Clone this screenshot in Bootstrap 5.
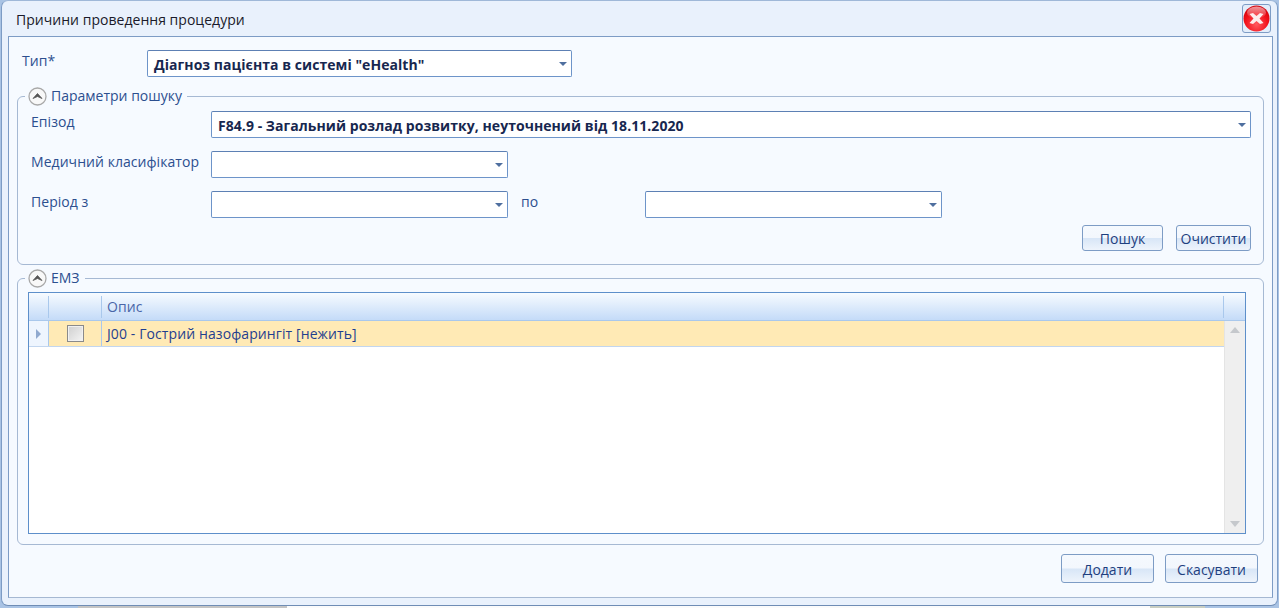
<!DOCTYPE html>
<html lang="uk">
<head>
<meta charset="utf-8">
<title>Причини проведення процедури</title>
<link href="https://cdn.jsdelivr.net/npm/bootstrap@5.3.0/dist/css/bootstrap.min.css" rel="stylesheet">
<style>
html,body{height:608px;overflow:hidden;}
body{background:#fff;font-family:"Open Sans","Noto Sans","Liberation Sans",sans-serif;font-size:14px;color:#1e3f7f;}
.backdrop{height:608px;background:linear-gradient(90deg,#a9c3e4 0,#a9c3e4 78px,#c4c4c4 78px,#c4c4c4 287px,#fbfbfb 287px,#fbfbfb 1150px,#c9cec2 1150px,#c9cec2 1205px,#a9c3e4 1205px);}
.win{margin-left:1px;width:1277px;height:606px;background:#e9f1fc;border:1px solid #7d9cc5;border-top-color:#9fb8d8;border-bottom-color:#6f8db5;border-radius:7px;padding-left:6px;padding-right:4px;}
.titlebar{height:35px;padding-left:8px;padding-right:2px;}
.wintitle{font-size:14px;color:#1a1a2a;padding-top:2px;letter-spacing:.03px;}
.closebtn{width:29px;height:29px;border:1px solid #7d9cc5;border-radius:3px;background:#e3edfa;padding:0;}
.panel-main{height:562px;background:#f6faff;border:1px solid #7d9cc5;border-bottom-color:#a5b8d2;padding:13px 8px 0 8px;}
.lbl{color:#2c4f8f;letter-spacing:.05px;}
.lbl-type{width:130px;padding-left:5px;margin-top:-7px;}
.lbl-field{width:180px;margin-top:-6px;}
.combo{height:27px;background:#fff;border:1px solid #6d94c9;border-top-color:#5d80b4;border-radius:2px;font-weight:700;color:#17274f;padding:1px 5px 0 6px;font-size:14px;letter-spacing:.05px;}
.combo::after{content:"";margin-left:auto;margin-right:-1px;margin-top:-1px;border:4px solid transparent;border-top:4px solid #4f6f9f;border-bottom:0;width:0;height:0;}
.combo-type{width:425px;}
.combo-full{flex:1;}
.combo-narrow{width:297px;}
.grp{position:relative;border:1px solid #a6b9d3;border-radius:6px;width:1247px;}
.grp-one{height:169px;margin-top:19px;padding:14px 12px 0 13px;}
.grp-two{height:267px;margin-top:13px;padding:13px 17px 0 10px;}
.legendbox{position:absolute;left:7px;top:-11px;height:20px;background:#f6faff;padding:0 5px 0 3px;color:#2c4f8f;}
.legendbox span{line-height:20px;}
.chev{width:19px;height:19px;flex:none;}
.gaprow{margin-top:13px;}
.po{width:137px;padding-left:13px;margin-top:-6px;}
.cmd{height:26px;padding:2px 0 0;background:linear-gradient(#f5f9fe 0,#f3f7fd 48%,#d8e6f7 52%,#eef4fc 100%);border:1px solid #7d9cc5;border-radius:3px;color:#1e3f7f;font-size:14px;line-height:22px;}
.cmd-find{width:81px;}
.cmd-clear{width:75px;margin-left:13px;}
.cmdrow{margin-top:7px;}
.datagrid{height:242px;border:1px solid #5d8fca;background:#fff;}
.gridhead{height:28px;background:linear-gradient(#f7fbff,#c4dbf8);border-bottom:1px solid #a9c8ec;color:#4a66a8;}
.cell-a{width:19px;flex:none;}
.cell-b{width:53px;flex:none;border-left:1px solid #a9c8ec;}
.cell-c{flex:1;border-left:1px solid #a9c8ec;padding-left:5px;letter-spacing:.1px;}
.cell-d{width:22px;flex:none;border-left:1px solid #a9c8ec;}
.gridhead>div{height:22px;}
.gridbody{height:212px;}
.rowarea{flex:1;min-width:0;}
.datarow{height:26px;background:#ffeab5;border-bottom:1px solid #c2d6ef;color:#1f3f8f;}
.datarow .cell-a{height:100%;background:#eef5fe;}
.datarow .cell-b,.datarow .cell-c{height:100%;}
.arrow{border-left:5px solid #8fa9cf;border-top:5px solid transparent;border-bottom:5px solid transparent;width:0;height:0;margin-left:7px;}
.checkbox{width:17px;height:17px;border:1px solid #8a8a8a;background:linear-gradient(135deg,#cfcfcf,#f4f4f4);box-shadow:inset 0 0 0 1px #f1f1f1;}
.vscroll{width:21px;flex:none;background:#efefef;border-left:1px solid #e4e4e4;padding:6px 0;}
.sc-up,.sc-down{width:0;height:0;border-left:5px solid transparent;border-right:5px solid transparent;}
.sc-up{border-bottom:6px solid #c5c8cc;}
.sc-down{border-top:6px solid #c5c8cc;}
.dlgbtn{width:93px;height:29px;}
.footbar{margin-top:9px;padding-right:6px;gap:11px;}
</style>
</head>
<body>
<div class="backdrop">
<div class="win">
  <div class="titlebar d-flex align-items-center justify-content-between">
    <div class="wintitle">Причини проведення процедури</div>
    <button class="closebtn d-flex align-items-center justify-content-center" aria-label="Закрити">
      <svg width="27" height="27" viewBox="0 0 27 27">
        <defs>
          <radialGradient id="rg" cx=".5" cy=".72" r=".7"><stop offset="0" stop-color="#ff5a60"/><stop offset=".6" stop-color="#f3121c"/><stop offset="1" stop-color="#d2000a"/></radialGradient>
          <linearGradient id="gl" x1="0" y1="0" x2="0" y2="1"><stop offset="0" stop-color="#fff" stop-opacity=".6"/><stop offset="1" stop-color="#fff" stop-opacity=".05"/></linearGradient>
        </defs>
        <circle cx="13.5" cy="13.5" r="13" fill="url(#rg)"/>
        <ellipse cx="13.5" cy="7.5" rx="9.500" ry="6" fill="url(#gl)"/>
        <path d="M6.500 9 10 8 13.500 11 17 8 20.500 9 16.500 13.500 20.500 18 17 19 13.500 16 10 19 6.500 18 10.500 13.500Z" fill="#fdecec"/>
      </svg>
    </button>
  </div>
  <div class="panel-main">
    <div class="d-flex align-items-center">
      <div class="lbl lbl-type">Тип*</div>
      <div class="combo combo-type d-flex align-items-center">Діагноз пацієнта в системі "eHealth"</div>
    </div>
    <div class="grp grp-one">
      <div class="legendbox d-flex align-items-center gap-1">
        <svg class="chev" viewBox="0 0 19 19"><circle cx="9.500" cy="9.500" r="8.500" fill="#f8f8f8" stroke="#a8a8a8" stroke-width="1.300"/><path d="M5 11.500 9.500 6.500 14 11.500 9.500 9.500Z" fill="#555" stroke="#555" stroke-width=".8" stroke-linejoin="round"/></svg>
        <span>Параметри пошуку</span>
      </div>
      <div class="d-flex align-items-center">
        <div class="lbl lbl-field">Епізод</div>
        <div class="combo combo-full d-flex align-items-center">F84.9 - Загальний розлад розвитку, неуточнений від 18.11.2020</div>
      </div>
      <div class="d-flex align-items-center gaprow">
        <div class="lbl lbl-field">Медичний класифікатор</div>
        <div class="combo combo-narrow d-flex align-items-center"></div>
      </div>
      <div class="d-flex align-items-center gaprow">
        <div class="lbl lbl-field">Період з</div>
        <div class="combo combo-narrow d-flex align-items-center"></div>
        <div class="lbl po">по</div>
        <div class="combo combo-narrow d-flex align-items-center"></div>
      </div>
      <div class="d-flex justify-content-end cmdrow">
        <button class="cmd cmd-find">Пошук</button>
        <button class="cmd cmd-clear">Очистити</button>
      </div>
    </div>
    <div class="grp grp-two">
      <div class="legendbox d-flex align-items-center gap-1">
        <svg class="chev" viewBox="0 0 19 19"><circle cx="9.500" cy="9.500" r="8.500" fill="#f8f8f8" stroke="#a8a8a8" stroke-width="1.300"/><path d="M5 11.500 9.500 6.500 14 11.500 9.500 9.500Z" fill="#555" stroke="#555" stroke-width=".8" stroke-linejoin="round"/></svg>
        <span>ЕМЗ</span>
      </div>
      <div class="datagrid">
        <div class="gridhead d-flex align-items-center">
          <div class="cell-a"></div>
          <div class="cell-b"></div>
          <div class="cell-c">Опис</div>
          <div class="cell-d"></div>
        </div>
        <div class="gridbody d-flex">
          <div class="rowarea">
            <div class="datarow d-flex align-items-center">
              <div class="cell-a d-flex align-items-center"><div class="arrow"></div></div>
              <div class="cell-b d-flex align-items-center justify-content-center"><div class="checkbox"></div></div>
              <div class="cell-c d-flex align-items-center">J00 - Гострий назофарингіт [нежить]</div>
            </div>
          </div>
          <div class="vscroll d-flex flex-column justify-content-between align-items-center">
            <div class="sc-up"></div>
            <div class="sc-down"></div>
          </div>
        </div>
      </div>
    </div>
    <div class="d-flex justify-content-end footbar">
      <button class="cmd dlgbtn">Додати</button>
      <button class="cmd dlgbtn">Скасувати</button>
    </div>
  </div>
</div>
</div>
<script src="https://cdn.jsdelivr.net/npm/bootstrap@5.3.0/dist/js/bootstrap.bundle.min.js"></script>
</body>
</html>
